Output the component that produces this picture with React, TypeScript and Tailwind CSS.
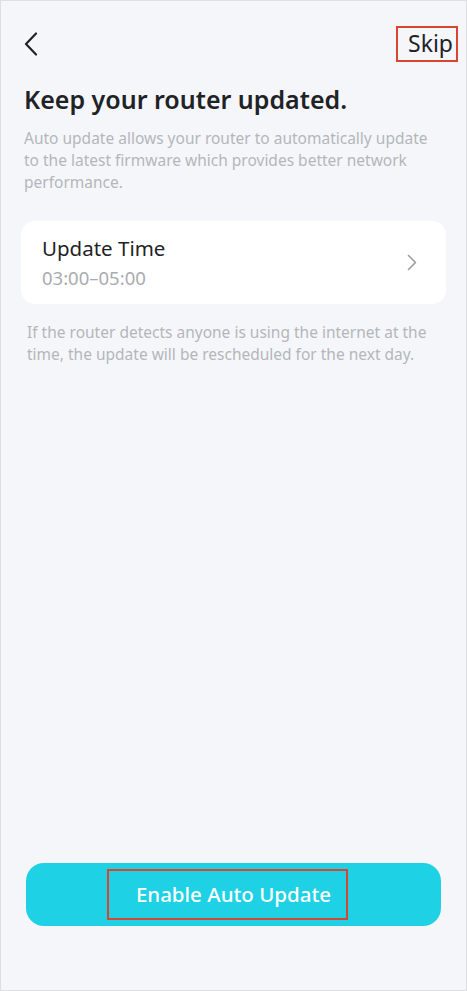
import React from "react";

const font = { fontFamily: '"Noto Sans", "Lato", sans-serif' };

const App: React.FC = () => {
  return (
    <div
      className="w-[467px] h-[991px] bg-[#f5f6fa] border border-[#dedfe3] flex flex-col overflow-hidden"
      style={font}
    >
      <div className="flex flex-row items-center justify-between pl-[23px] pr-[8px] pt-[24px] h-[61px]">
        <svg width="14" height="24" viewBox="0 0 14 24" fill="none">
          <path d="M12 1.5 L2 12 L12 22.5" stroke="#1f2326" strokeWidth="2.2" strokeLinecap="round" strokeLinejoin="round" />
        </svg>
        <span className="border-2 border-[#d9452f] h-[36px] w-[62px] flex items-center justify-end pr-[3px] text-[23px] text-[#1f2326] leading-none">
          Skip
        </span>
      </div>

      <h1 className="px-[23px] mt-[20px] text-[25px] leading-[34px] font-semibold text-[#1f2326]">
        Keep your router updated.
      </h1>
      <p className="px-[23px] mt-[11px] text-[15.5px] leading-[22px] text-[#b4b6ba]">
        Auto update allows your router to automatically update to the latest firmware which provides better network performance.
      </p>

      <div className="mx-[20px] mt-[28px] h-[83px] bg-white rounded-[14px] flex flex-row items-center justify-between pl-[21px] pr-[29px]">
        <div className="flex flex-col">
          <span className="text-[20.5px] leading-[28px] text-[#1f2326]">Update Time</span>
          <span className="text-[18.5px] leading-[26px] text-[#a9abaf] mt-[3px]">03:00–05:00</span>
        </div>
        <svg width="10" height="17" viewBox="0 0 10 17" fill="none">
          <path d="M1.5 1.5 L8.5 8.5 L1.5 15.5" stroke="#9a9c9f" strokeWidth="1.6" strokeLinecap="round" strokeLinejoin="round" />
        </svg>
      </div>

      <p className="px-[26px] mt-[17px] text-[15.5px] leading-[22px] text-[#b4b6ba]">
        If the router detects anyone is using the internet at the time, the update will be rescheduled for the next day.
      </p>

      <div className="mt-auto mb-[64px] mx-[25px]">
        <div className="relative h-[63px] rounded-[18px] bg-[#1ed1e5] flex items-center justify-center">
          <span className="text-[20.5px] text-white font-medium">Enable Auto Update</span>
          <div className="absolute left-[81px] top-[6px] w-[241px] h-[51px] border-2 border-[#d9452f]" />
        </div>
      </div>
    </div>
  );
};

export default App;
